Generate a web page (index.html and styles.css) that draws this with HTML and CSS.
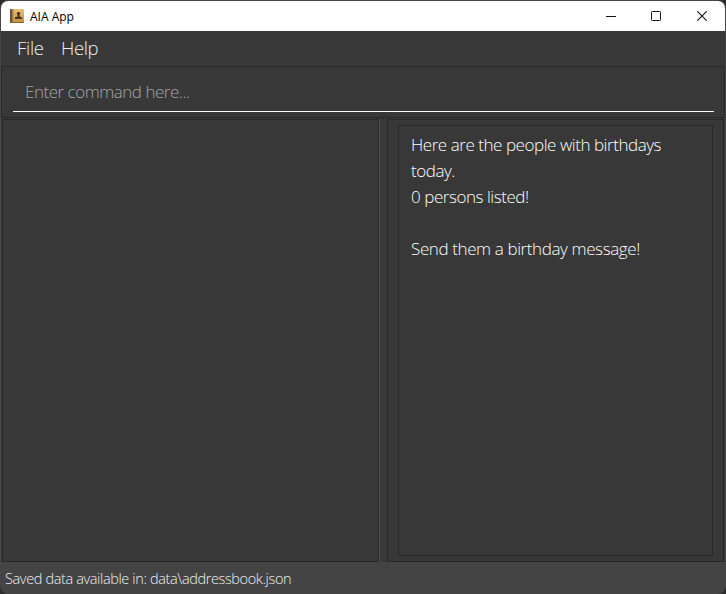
FILE: index.html
```html
<!DOCTYPE html>
<html lang="en">
<head>
<meta charset="utf-8">
<title>AIA App</title>
<link rel="stylesheet" href="styles.css">
</head>
<body>
<div class="window">
  <header class="titlebar">
    <svg class="app-icon" width="14" height="14" viewBox="0 0 14 14">
      <defs><linearGradient id="cover" x1="0" y1="0" x2="0" y2="1"><stop offset="0" stop-color="#e9bd78"/><stop offset="1" stop-color="#c68f40"/></linearGradient></defs>
      <rect width="14" height="14" rx="1" fill="url(#cover)"/>
      <rect width="2" height="14" rx="1" fill="#67513a"/>
      <rect x="2" width="1.500" height="14" fill="#a98252"/>
      <path d="M0 13.500h14" stroke="#8d672e"/>
      <path d="M8.500 3a1.600 1.600 0 0 1 1 2.900v1.600l2.500 .8V10H5V8.300l2.500-.8V5.900a1.600 1.600 0 0 1 1-2.900z" fill="#49351d"/>
    </svg>
    <span class="title">AIA App</span>
    <svg class="controls" width="104" height="12" viewBox="0 0 104 12" fill="none" stroke="#111">
      <path d="M0 6.500h10"/>
      <rect x="45.500" y="1.500" width="9" height="9" rx="1"/>
      <path d="M91.300 1.300l9.400 9.400M100.700 1.300l-9.400 9.400" stroke-width="1.100"/>
    </svg>
  </header>
  <nav class="menu"><span class="menu-file">File</span><span class="menu-help">Help</span></nav>
  <section class="command"><div class="field">Enter command here...</div></section>
  <main class="split">
    <section class="list"></section>
    <div class="divider"></div>
    <section class="result">
      <div class="output">
        <p class="line-a">Here are the people with birthdays</p>
        <p class="line-b">today.</p>
        <p class="line-c">0 persons listed!</p>
        <p class="line-d">Send them a birthday message!</p>
      </div>
    </section>
  </main>
  <footer class="status"><span>Saved data available in: data\addressbook.json</span></footer>
</div>
</body>
</html>
```
FILE: styles.css
```css
* { box-sizing: border-box; }
body { margin: 0; background: #2b2b2b; font-family: "Open Sans", "Noto Sans", sans-serif; font-weight: 300; }
.window { width: 726px; height: 594px; display: flex; flex-direction: column; border: 1px solid #464646; border-bottom: 0; border-radius: 8px; overflow: hidden; background: #383838; }
.titlebar { height: 30px; flex: none; background: #fff; display: flex; align-items: center; padding-left: 9px; }
.title { margin-left: 6px; font-size: 12px; font-weight: 400; color: #000; letter-spacing: 0; white-space: nowrap; }
.controls { margin-left: auto; margin-right: 15px; }
.menu { height: 35px; flex: none; display: flex; align-items: center; padding: 0 0 2px 16px; font-size: 18.500px; letter-spacing: -0.4px; color: #f0f0f0; }
.menu span { white-space: nowrap; }
.menu-file { width: 44px; letter-spacing: -0.3px; }
.command { height: 52px; flex: none; border: 1px solid #292929; padding: 6px 10px 0 11px; }
.field { height: 39px; border-bottom: 1px solid #fff; padding-left: 12px; line-height: 37px; font-size: 17px; letter-spacing: -0.48px; color: #a6a6a6; white-space: nowrap; }
.split { height: 444px; flex: none; display: flex; padding: 1px 1px 0; }
.list { width: 377px; border: 1px solid #292929; }
.divider { width: 8px; border-left: 1px solid #515151; }
.result { flex: 1; border: 1px solid #292929; padding: 5px 10px; }
.output { height: 431px; border: 1px solid #292929; padding: 6px 12px; font-size: 17px; line-height: 26px; letter-spacing: -0.45px; color: #fff; }
.output p { margin: 0; white-space: nowrap; }
.output .line-d { margin-top: 26px; letter-spacing: -0.39px; }
.status { flex: 1; background: #444; padding-left: 4px; font-size: 14.500px; line-height: 34px; letter-spacing: -0.37px; color: #f0f0f0; white-space: nowrap; }
```
